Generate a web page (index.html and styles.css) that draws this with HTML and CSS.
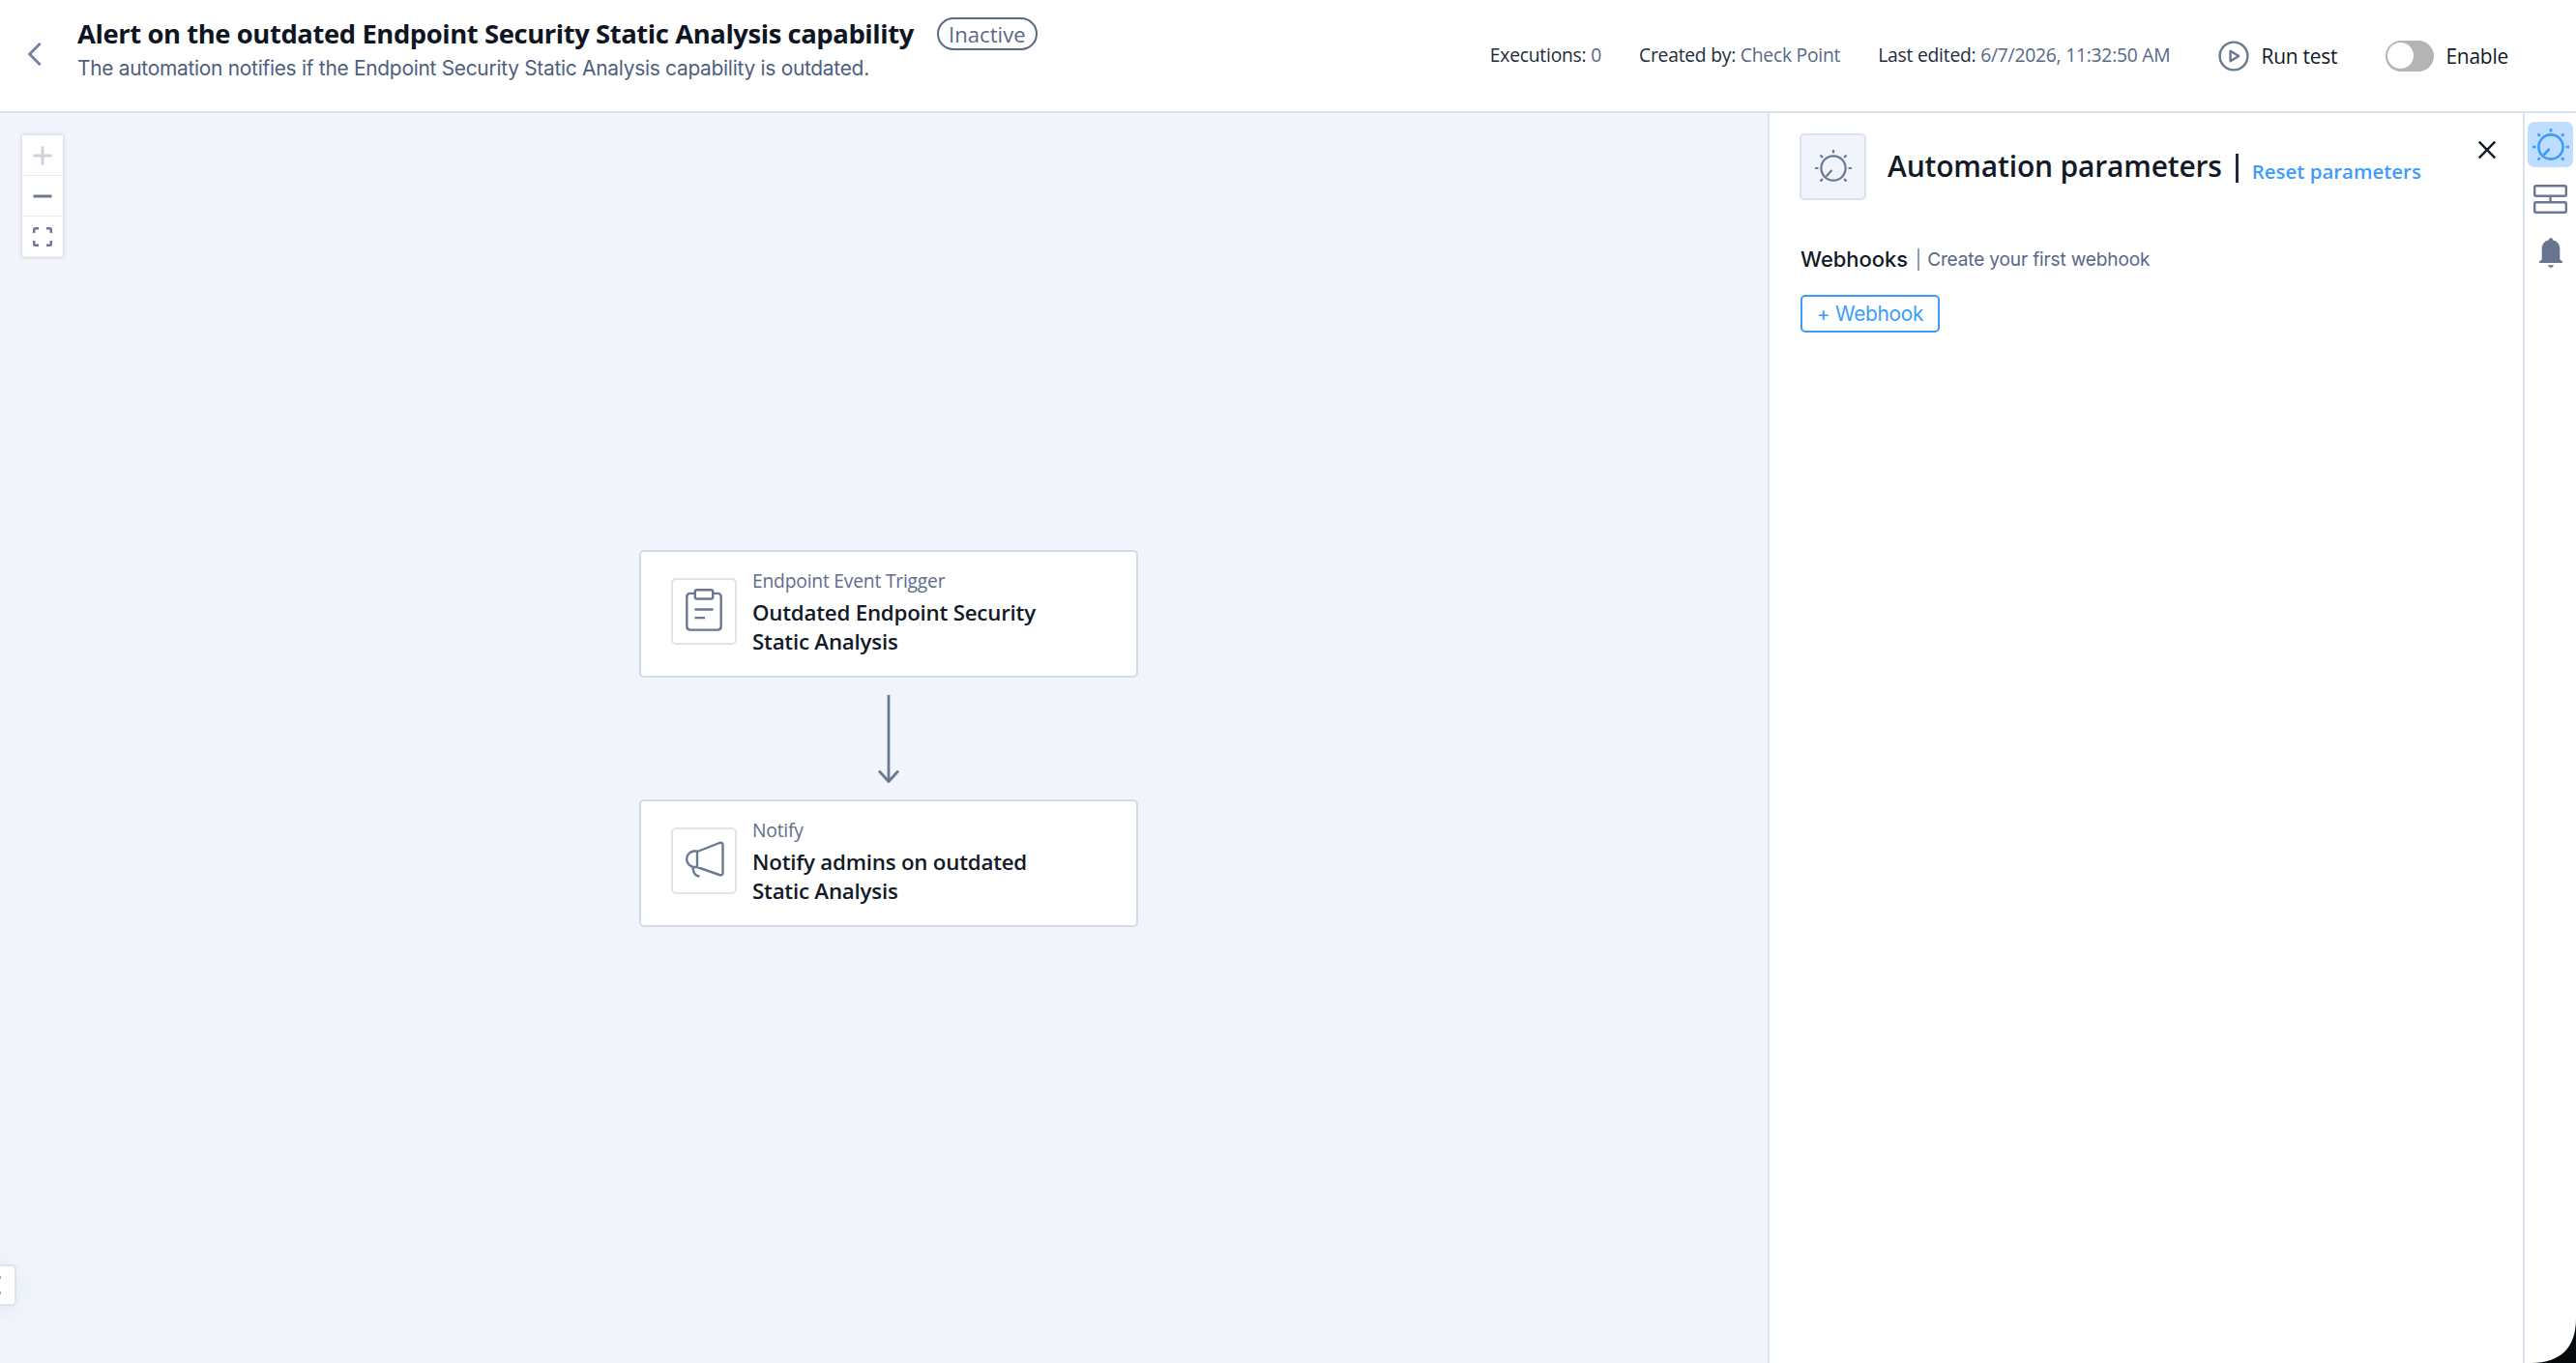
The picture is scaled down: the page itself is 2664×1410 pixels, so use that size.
FILE: index.html
```html
<!DOCTYPE html>
<html lang="en">
<head>
<meta charset="utf-8">
<title>Automation editor</title>
<link rel="stylesheet" href="styles.css">
</head>
<body>
<div class="app">
  <header class="topbar">
    <button class="back" aria-label="Back"><svg width="15" height="24" viewBox="0 0 15 24"><path d="M12.8 1.8 2.6 12l10.2 10.2"/></svg></button>
    <div class="heading">
      <div class="title-row"><h1>Alert on the outdated Endpoint Security Static Analysis capability</h1><span class="status">Inactive</span></div>
      <p class="subtitle">The automation notifies if the Endpoint Security Static Analysis capability is outdated.</p>
    </div>
    <div class="meta">
      <span>Executions: <b>0</b></span>
      <span>Created by: <b>Check Point</b></span>
      <span>Last edited: <b>6/7/2026, 11:32:50 AM</b></span>
    </div>
    <button class="run"><svg width="32" height="32" viewBox="0 0 32 32"><circle cx="16" cy="16" r="14.4"/><path d="M12.6 10.8v10.4l8.6-5.2z"/></svg>Run test</button>
    <label class="enable"><span class="switch"><i></i></span>Enable</label>
  </header>
  <div class="body">
    <main class="canvas">
      <div class="controls">
        <button disabled><svg width="20" height="20" viewBox="0 0 20 20"><path d="M10 .5v19M.5 10h19"/></svg></button>
        <button><svg width="20" height="20" viewBox="0 0 20 20"><path d="M.5 10h19"/></svg></button>
        <button><svg class="fit" width="20" height="20" viewBox="0 0 20 20"><path d="M1.2 6V2.8Q1.2 1.2 2.8 1.2H6M14 1.2h3.2q1.6 0 1.6 1.6V6M18.8 14v3.2q0 1.6-1.6 1.6H14M6 18.8H2.8q-1.6 0-1.6-1.6V14"/></svg></button>
      </div>
      <article class="node trigger">
        <div class="node-icon"><svg width="38" height="44" viewBox="0 0 38 46" preserveAspectRatio="none"><path d="M9.5 5H5Q1.3 5 1.3 8.7V40.8Q1.3 44.5 5 44.5H33Q36.7 44.5 36.7 40.8V8.7Q36.7 5 33 5H28.5M9.5 22.5H28.5M9.5 31.5H20"/><rect x="9.8" y="1.3" width="18.4" height="9.7" rx="1.8"/></svg></div>
        <div><p class="kind">Endpoint Event Trigger</p><h2>Outdated Endpoint Security<br>Static Analysis</h2></div>
      </article>
      <svg class="arrow" width="24" height="92" viewBox="0 0 24 92"><path d="M12 0V90M2 78.5 12 89.5 22 78.5"/></svg>
      <article class="node notify">
        <div class="node-icon"><svg width="42" height="38" viewBox="0 0 42 38"><path d="M14 11 37 2Q40.5 1 40.5 4V33Q40.5 36 37 35L14 27ZM14 10.5H10.5A8.3 8.3 0 0 0 10.500 27H14M9.500 27Q10 36.500 16.500 36.500"/></svg></div>
        <div><p class="kind">Notify</p><h2>Notify admins on outdated<br>Static Analysis</h2></div>
      </article>
      <button class="drawer" aria-label="Open drawer"><i></i><i></i></button>
    </main>
    <aside class="panel">
      <div class="panel-head">
        <div class="panel-icon"><svg class="dial" width="38" height="34" viewBox="0 0 38 34"><circle cx="19" cy="19" r="12.6"/><path d="M17.5 21 11.5 27.5M19 0v3.5M0 19h3.5M34.5 19H38M5.5 5.5l2.4 2.4M32.5 5.5l-2.4 2.4M5.5 32.5l2.4-2.4M32.5 32.5l-2.4-2.4"/></svg></div>
        <h2>Automation parameters</h2><span class="bar"></span><a>Reset parameters</a>
        <button class="close" aria-label="Close"><svg width="18" height="20" viewBox="0 0 18 20"><path d="M.8 1.5 17.2 18.5M17.2 1.5.8 18.5"/></svg></button>
      </div>
      <div class="section"><h3>Webhooks</h3><span class="thin"></span><span class="hint">Create your first webhook</span></div>
      <button class="add"><span>+</span> Webhook</button>
    </aside>
    <nav class="rail">
      <button class="active"><svg class="dial" width="38" height="36" viewBox="0 0 38 34"><circle cx="19" cy="19" r="12.6"/><path d="M17.5 21 11.5 27.5M19 0v3.5M0 19h3.5M34.5 19H38M5.5 5.5l2.4 2.4M32.5 5.5l-2.4 2.4M5.5 32.5l2.4-2.4M32.5 32.5l-2.4-2.4"/></svg></button>
      <button><svg class="blocks" width="35" height="30" viewBox="0 0 35 30"><rect x="1.2" y="1.2" width="32.6" height="10.5" rx="1.5"/><rect x="1.2" y="18.3" width="32.6" height="10.5" rx="1.5"/><path d="M17.5 11.5v7"/></svg></button>
      <button><svg class="bell" width="24" height="31" viewBox="0 0 24 31"><path d="M12 0c1.3 0 2 1 2 2.3 4.5 1 7.3 4.5 7.3 9.2V22.5l2.7 2v1.5H0v-1.5l2.7-2v-11C2.7 6.8 5.5 3.3 10 2.3 10 1 10.7 0 12 0ZM9 28.3h6Q14.3 30.8 12 30.8T9 28.3Z"/></svg></button>
    </nav>
  </div>
  <svg class="corner" width="50" height="50" viewBox="0 0 50 50"><path d="M50 4V50H4C34 50 50 34 50 4Z"/></svg>
</div>
</body>
</html>
```
FILE: styles.css
```css
* { box-sizing: border-box; margin: 0; padding: 0; }
body { font-family: "Open Sans", "Noto Sans", sans-serif; color: #121a28; background: #fff; overflow: hidden; }
button { font: inherit; color: inherit; background: none; border: 0; }
svg { display: block; fill: none; stroke: #6a7891; stroke-width: 2.4; stroke-linejoin: round; flex: none; }
.app { position: relative; height: 1410px; display: flex; flex-direction: column; }

.topbar { height: 117px; border-bottom: 2px solid #dbe1ed; display: flex; align-items: center; padding-left: 28px; flex: none; }
.back { width: 52px; margin-bottom: 3px; }
.back svg { stroke: #7484a8; stroke-width: 3; stroke-linecap: round; }
.heading { align-self: flex-start; padding-top: 17px; }
.title-row { display: flex; height: 36px; align-items: center; gap: 24px; }
h1 { font-size: 27.4px; letter-spacing: -.41px; font-weight: 700; line-height: 36px; white-space: nowrap; color: #0e1624; }
.status { height: 34px; width: 104px; border: 2px solid #5a6985; border-radius: 17px; font-size: 22.1px; line-height: 31px; text-align: center; color: #5a6985; }
.subtitle { font-family: Inter, sans-serif; font-size: 20.9px; letter-spacing: -.27px; line-height: 36px; color: #4e5f7f; white-space: nowrap; }
.meta { display: flex; gap: 39px; margin-left: auto; margin-bottom: 2px; font-size: 19.3px; letter-spacing: -.23px; color: #222b3a; white-space: nowrap; }
.meta b { font-weight: 400; color: #56688a; }
.run, .enable { display: flex; align-items: center; font-size: 20.9px; letter-spacing: -.2px; white-space: nowrap; }
.run { margin-left: 50px; gap: 12px; }
.enable { margin: 0 70px 0 50px; gap: 12px; }
.switch { width: 50px; height: 32px; border-radius: 16px; background: #b4b4b4; display: flex; align-items: center; padding-left: 2px; }
.switch i { width: 27px; height: 27px; border-radius: 50%; background: #fff; }

.body { flex: 1; display: flex; }
.canvas { position: relative; flex: 1; background: #f1f5fb; overflow: hidden; }
.controls { position: absolute; left: 23px; top: 23px; width: 42px; background: #fff; box-shadow: 0 0 3px 1px rgba(0,0,0,.12); }
.controls button { width: 42px; height: 42px; display: grid; place-items: center; border-bottom: 1.5px solid #eaeaea; }
.controls svg { stroke-width: 3; }
.controls [disabled] svg { stroke: #cdd2da; }
.controls .fit { stroke-width: 2.5; }
.node { position: absolute; left: 661px; width: 516px; height: 132px; background: #fff; border: 2px solid #d3daea; border-radius: 5px; display: flex; align-items: flex-start; padding: 15px 0 0 31px; gap: 16px; }
.trigger { top: 452px; }
.notify { top: 710px; }
.node-icon { width: 68px; height: 69px; margin-top: 12px; border: 2px solid #dfe4ef; border-radius: 5px; display: grid; place-items: center; }
.node-icon svg { margin-bottom: 3px; }
.notify .node-icon svg { margin-right: 1px; }
.kind { font-size: 19.3px; letter-spacing: -.22px; line-height: 30px; color: #5d6d8b; }
.node h2 { font-size: 22.3px; letter-spacing: -.22px; font-weight: 600; line-height: 30px; margin-top: 3px; white-space: nowrap; }
.arrow { position: absolute; left: 907px; top: 602px; }
.arrow path { stroke-width: 2.8; }
.drawer { position: absolute; left: -20px; top: 1191px; width: 37px; height: 43px; background: #fff; border: 2px solid #dee4ef; border-radius: 5px; box-shadow: 0 4px 18px rgba(60,90,160,.08); display: flex; flex-direction: column; align-items: flex-end; gap: 13px; padding: 10px 14px 0 0; }
.drawer i { width: 3px; height: 3px; border-radius: 50%; background: #7c89a3; }

.panel { width: 781px; border-left: 2px solid #dbe1ed; padding: 21px 31px 0; }
.panel-head { position: relative; height: 69px; display: flex; align-items: center; }
.panel-icon { width: 69px; height: 69px; border: 2px solid #dbe1ed; border-radius: 5px; background: #f1f5fb; display: grid; place-items: center; }
.panel-icon svg { margin-bottom: 2px; }
.dial { stroke-width: 2.2; }
.panel-head h2 { font-size: 30px; letter-spacing: -.18px; font-weight: 600; margin: -2px 0 0 22px; white-space: nowrap; }
.bar { width: 3px; height: 30px; background: #222b3a; margin: 2px 14px 0; }
.panel-head a { font-size: 20.45px; font-weight: 600; color: #3d9cfb; margin-top: 8px; white-space: nowrap; }
.close { position: absolute; right: -3px; top: 7px; }
.close svg { stroke: #121a28; }
.section { display: flex; align-items: center; margin: 43px 0 0 1px; height: 36px; font-family: Inter, sans-serif; }
.section h3 { font-size: 21.95px; font-weight: 500; }
.thin { width: 2px; height: 23px; background: #909cb2; margin: 0 8px 0 10px; }
.hint { font-size: 19.1px; letter-spacing: -.17px; color: #56688a; }
.add { margin: 19px 0 0 1px; width: 144px; height: 39px; padding-bottom: 1px; border: 2px solid #3d9cfb; border-radius: 5px; font-family: Inter, sans-serif; font-size: 20.8px; letter-spacing: -.25px; color: #3d9cfb; white-space: pre; }

.rail { width: 55px; border-left: 2px solid #dbe1ed; display: flex; flex-direction: column; align-items: center; padding-top: 9px; gap: 9px; }
.rail button { width: 47px; height: 47px; border-radius: 7px; display: grid; place-items: center; }
.rail .active { background: #bfddff; }
.active svg { stroke: #3d9cfb; stroke-width: 2.6; }
.bell { fill: #67758f; stroke: none; }
.corner { position: absolute; right: 0; bottom: 0; fill: #06090b; stroke: none; }
```
